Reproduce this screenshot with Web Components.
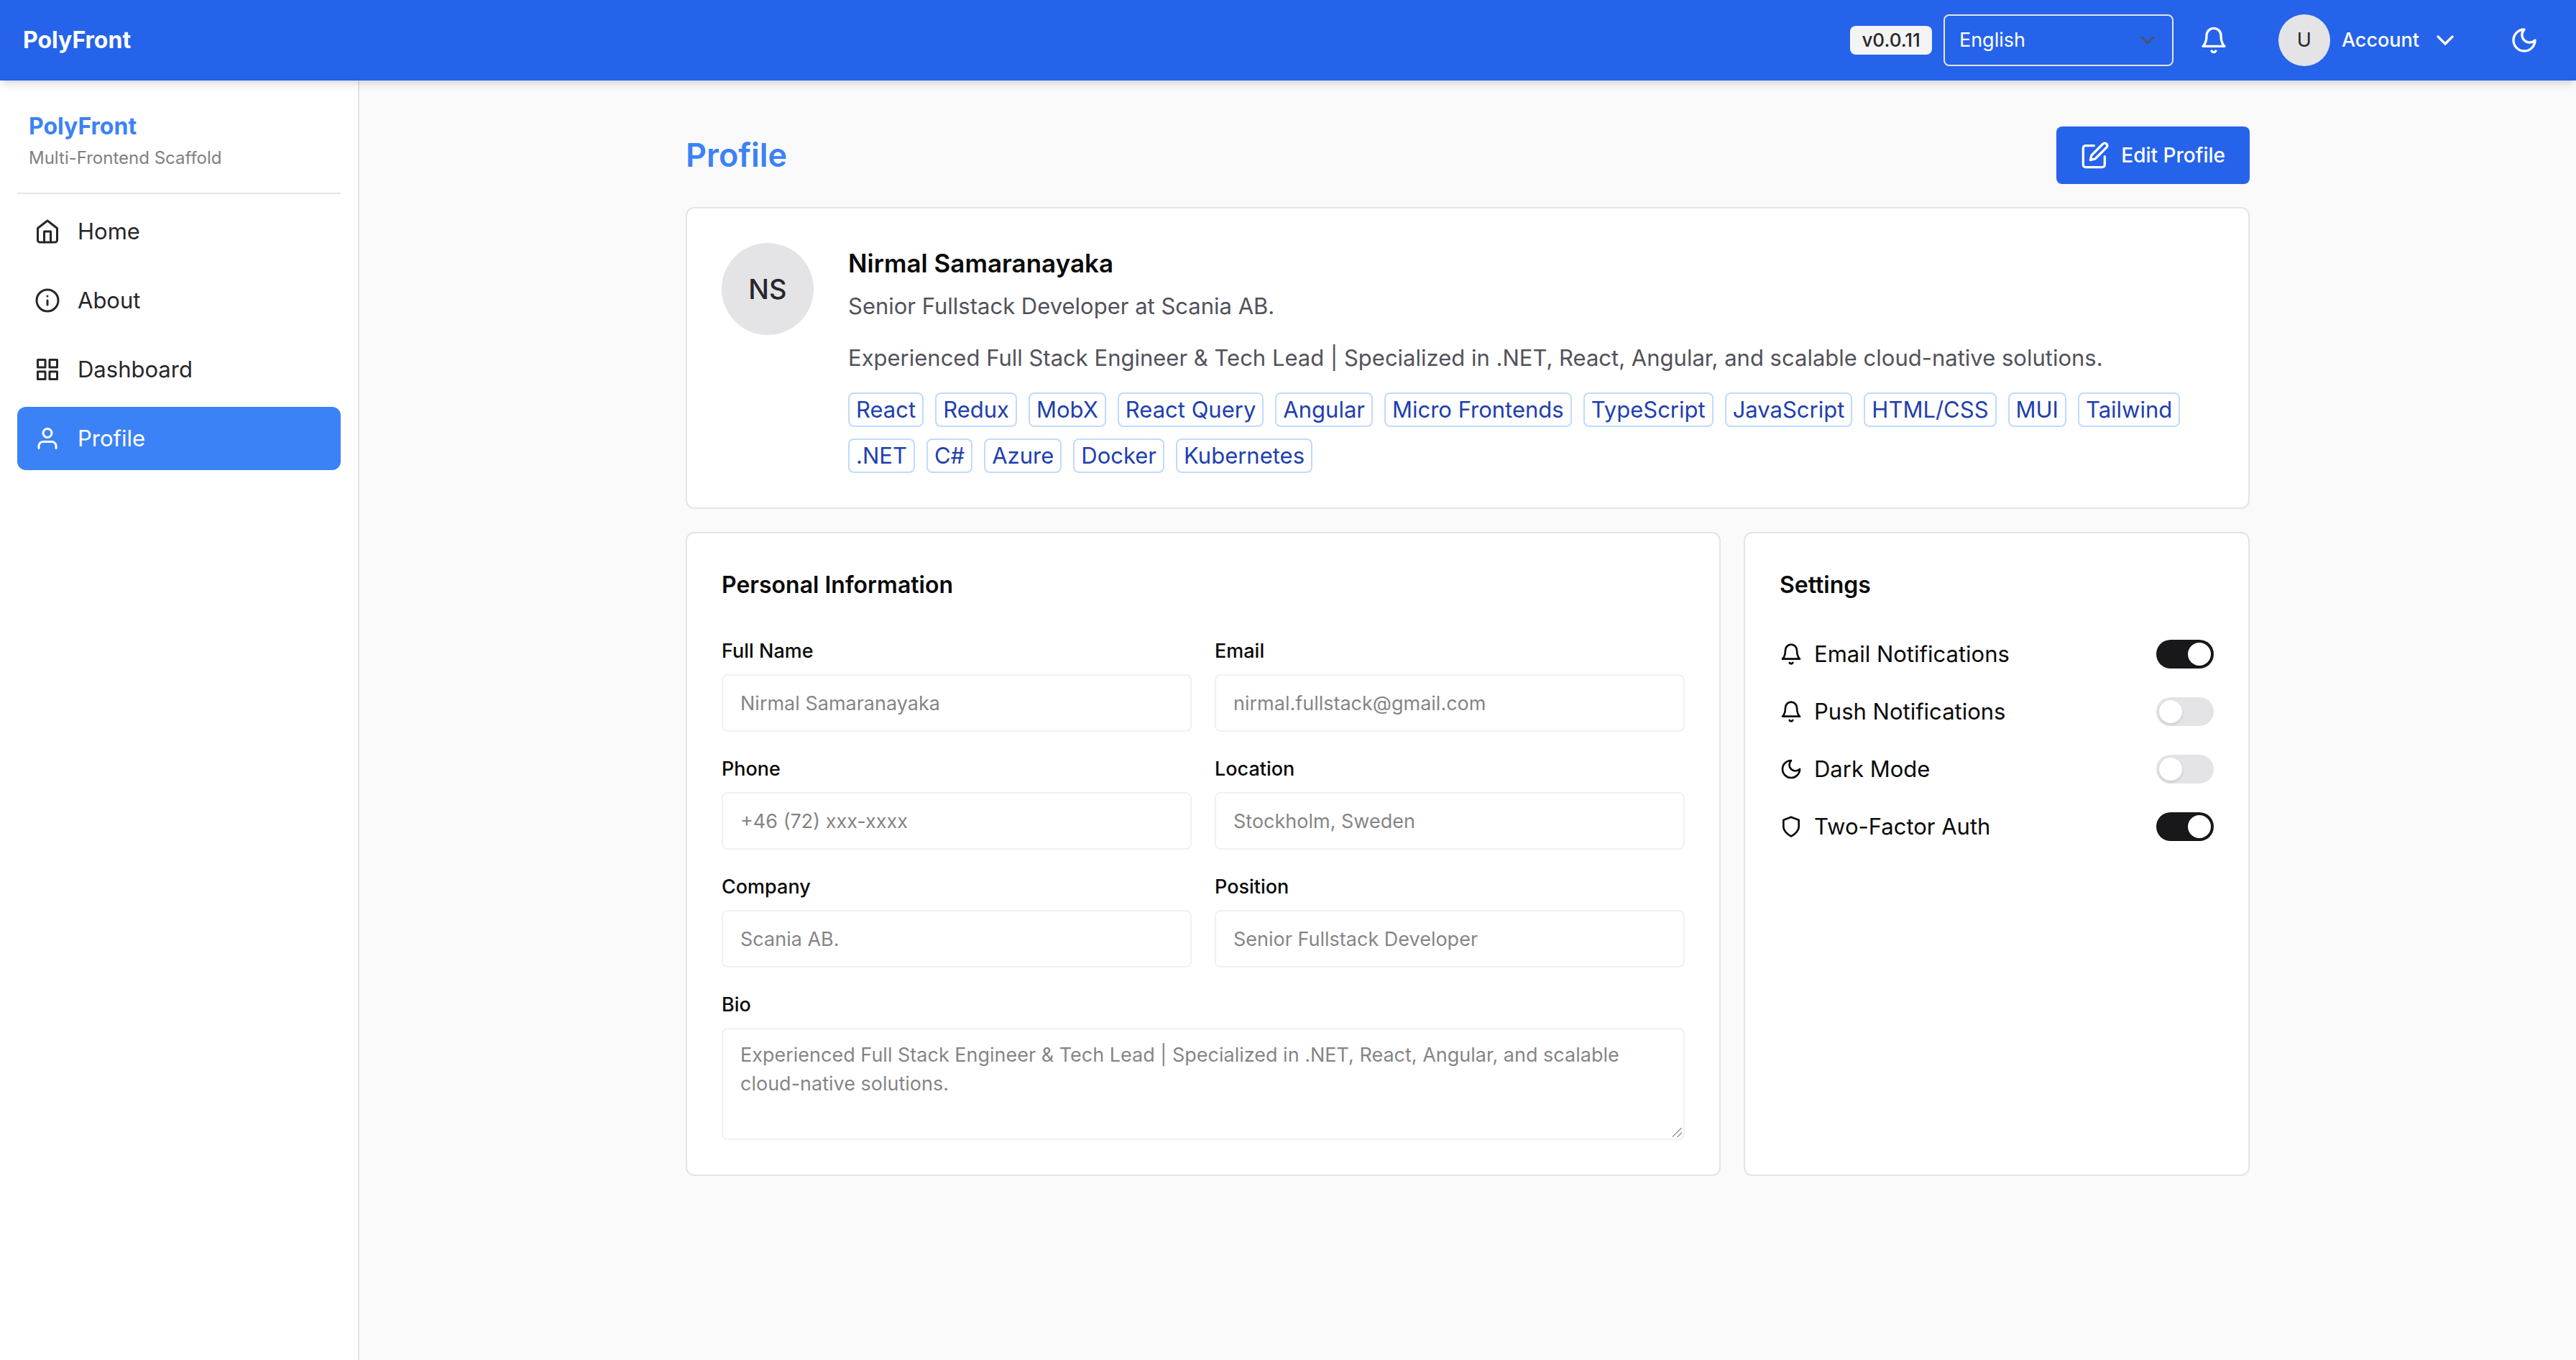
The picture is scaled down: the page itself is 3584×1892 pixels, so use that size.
<!DOCTYPE html>
<html lang="en">
<head>
<meta charset="utf-8">
<meta name="viewport" content="width=device-width, initial-scale=1">
<title>PolyFront - Profile</title>
<style>
  :root {
    --brand: #2563eb;
    --accent: #3b82f6;
    --line: #e4e4e7;
    --ink: #0a0a0a;
    --ink-soft: #27272a;
    --muted: #52525b;
    --page: #fafafa;
    --text-sm: 27px;
    --text-lg: 32px;
  }
  html, body { height: 100%; }
  body {
    margin: 0;
    background: var(--page);
    color: var(--ink);
    font: 400 31px/48px Inter, "Liberation Sans", sans-serif;
  }
</style>
</head>
<body>
<pf-app></pf-app>

<script>
  const ICONS = {
    home: '<path d="m3 9 9-7 9 7v11a2 2 0 0 1-2 2H5a2 2 0 0 1-2-2z"/><path d="M9 22V12h6v10"/>',
    info: '<circle cx="12" cy="12" r="10"/><path d="M12 16v-4"/><path d="M12 8h.01"/>',
    grid: '<rect x="3" y="3" width="7" height="7"/><rect x="14" y="3" width="7" height="7"/><rect x="14" y="14" width="7" height="7"/><rect x="3" y="14" width="7" height="7"/>',
    user: '<path d="M20 21v-2a4 4 0 0 0-4-4H8a4 4 0 0 0-4 4v2"/><circle cx="12" cy="7" r="4"/>',
    bell: '<path d="M6 8a6 6 0 0 1 12 0c0 7 3 9 3 9H3s3-2 3-9"/><path d="M10.3 21a1.94 1.94 0 0 0 3.4 0"/>',
    moon: '<path d="M12 3a6 6 0 0 0 9 9 9 9 0 1 1-9-9Z"/>',
    shield: '<path d="M12 22s8-4 8-10V5l-8-3-8 3v7c0 6 8 10 8 10"/>',
    chevron: '<path d="m6 9 6 6 6-6"/>',
    edit: '<path d="M11 4H4a2 2 0 0 0-2 2v14a2 2 0 0 0 2 2h14a2 2 0 0 0 2-2v-7"/><path d="M18.5 2.5a2.121 2.121 0 0 1 3 3L12 15l-4 1 1-4 9.5-9.5z"/>'
  };

  const define = (name, render) => customElements.define(name, class extends HTMLElement {
    constructor() {
      super();
      this.attachShadow({ mode: 'open' });
    }
    connectedCallback() {
      const t = document.createElement('template');
      t.innerHTML = `<style>*, ::before { box-sizing: border-box; } h1, h2, p { margin: 0; }
        button, input, textarea, select { font: inherit; margin: 0; }</style>` + render(this);
      this.shadowRoot.replaceChildren(t.content.cloneNode(true));
    }
  });
  const attr = (el, name) => (el.getAttribute(name) || '').replace(/&/g, '&amp;').replace(/"/g, '&quot;');

  define('pf-icon', el => `
    <style>
      :host { display: block; flex: none; width: 40px; height: 40px; }
      svg { display: block; width: 100%; height: 100%; }
    </style>
    <svg viewBox="0 0 24 24" fill="none" stroke="currentColor" stroke-width="2" stroke-linecap="round" stroke-linejoin="round" aria-hidden="true">${ICONS[el.getAttribute('name')]}</svg>`);

  define('pf-avatar', () => `
    <style>
      :host { display: flex; flex: none; align-items: center; justify-content: center; width: 72px; height: 72px;
        border-radius: 50%; background: var(--line); color: var(--ink-soft); font-size: var(--text-sm); font-weight: 400; }
      :host([size="lg"]) { width: 128px; height: 128px; font-size: 38px; font-weight: 500; }
    </style><slot></slot>`);

  define('pf-button', () => `
    <style>
      :host { display: block; }
      button { display: flex; align-items: center; gap: 16px; height: 80px; padding: 0 32px; border: 2px solid transparent;
        border-radius: 8px; background: var(--brand); color: #fff; font-size: var(--text-sm); line-height: 40px; font-weight: 500; }
      :host([primary]) button { font-size: 28px; }
      :host([square]) button { justify-content: center; width: 80px; padding: 0; }
    </style>
    <button type="button"><slot></slot></button>`);

  define('pf-language', () => `
    <style>
      :host { display: grid; width: 320px; height: 72px; color: #fff; }
      select, pf-icon { grid-area: 1 / 1; }
      select { appearance: none; padding: 0 20px; border: 2px solid var(--line); border-radius: 8px;
        background: transparent; color: inherit; font-size: var(--text-sm); line-height: 40px; }
      option { color: var(--ink); }
      pf-icon { place-self: center end; width: 32px; height: 32px; margin-right: 20px; color: #52525b; pointer-events: none; }
    </style>
    <select aria-label="Language"><option>English</option></select><pf-icon name="chevron"></pf-icon>`);

  define('pf-header', () => `
    <style>
      :host { display: flex; align-items: center; justify-content: space-between; height: 112px; padding: 0 32px;
        box-sizing: border-box; background: var(--brand); color: #fff; z-index: 1;
        box-shadow: 0 8px 12px -2px rgb(0 0 0 / .1), 0 4px 8px -4px rgb(0 0 0 / .1); }
      .brand { font-size: var(--text-lg); font-weight: 700; }
      .tools { display: flex; align-items: center; gap: 16px; }
      .version { padding: 0 16px; border-radius: 8px; background: #f4f4f5; color: var(--ink-soft);
        font-size: 26px; line-height: 40px; font-weight: 500; }
    </style>
    <span class="brand">PolyFront</span>
    <div class="tools">
      <span class="version">v0.0.11</span>
      <pf-language></pf-language>
      <pf-button square><pf-icon name="bell"></pf-icon></pf-button>
      <pf-button><pf-avatar>U</pf-avatar>Account<pf-icon name="chevron"></pf-icon></pf-button>
      <pf-button square><pf-icon name="moon"></pf-icon></pf-button>
    </div>`);

  define('pf-nav-item', () => `
    <style>
      :host { display: block; color: var(--ink-soft); }
      a { display: flex; align-items: center; gap: 24px; padding: 20px 24px; border-radius: 12px; color: inherit; text-decoration: none; }
      :host([active]) a { background: var(--accent); color: #fff; }
      ::slotted(pf-icon) { width: 36px; height: 36px; }
    </style>
    <a href="#"><slot></slot></a>`);

  define('pf-sidebar', () => `
    <style>
      :host { display: block; box-sizing: border-box; flex: none; width: 500px; padding: 24px; border-right: 2px solid var(--line); background: #fff; }
      .head { padding: 16px 16px 32px; border-bottom: 2px solid var(--line); }
      .name { margin-bottom: 4px; color: var(--accent); font-size: var(--text-lg); font-weight: 700; }
      .tag { color: #808080; font-size: 24px; line-height: 32px; }
      nav { display: grid; gap: 8px; padding-top: 8px; }
    </style>
    <div class="head"><p class="name">PolyFront</p><p class="tag">Multi-Frontend Scaffold</p></div>
    <nav>
      <pf-nav-item><pf-icon name="home"></pf-icon>Home</pf-nav-item>
      <pf-nav-item><pf-icon name="info"></pf-icon>About</pf-nav-item>
      <pf-nav-item><pf-icon name="grid"></pf-icon>Dashboard</pf-nav-item>
      <pf-nav-item active><pf-icon name="user"></pf-icon>Profile</pf-nav-item>
    </nav>`);

  define('pf-card', () => `
    <style>
      :host { display: block; box-sizing: border-box; padding: 48px; border: 2px solid var(--line); border-radius: 12px; background: #fff; }
    </style><slot></slot>`);

  define('pf-chip', () => `
    <style>
      :host { display: block; padding: 0 9px; border: 2px solid #bfdbfe; border-radius: 8px; color: #1e40af; line-height: 44px; }
    </style><slot></slot>`);

  define('pf-summary', () => `
    <style>
      :host { display: flex; gap: 48px; }
      .text { flex: 1; min-width: 0; color: var(--muted); }
      h2 { margin-bottom: 8px; color: var(--ink); font-size: 35px; line-height: 56px; font-weight: 600; }
      .role, .bio { margin-bottom: 24px; }
      .chips { display: flex; flex-wrap: wrap; gap: 16px; }
    </style>
    <pf-avatar size="lg">NS</pf-avatar>
    <div class="text">
      <h2>Nirmal Samaranayaka</h2>
      <p class="role">Senior Fullstack Developer at Scania AB.</p>
      <p class="bio">Experienced Full Stack Engineer &amp; Tech Lead | Specialized in .NET, React, Angular, and scalable cloud-native solutions.</p>
      <div class="chips">${['React', 'Redux', 'MobX', 'React Query', 'Angular', 'Micro Frontends', 'TypeScript', 'JavaScript',
        'HTML/CSS', 'MUI', 'Tailwind', '.NET', 'C#', 'Azure', 'Docker', 'Kubernetes'].map(s => `<pf-chip>${s}</pf-chip>`).join('')}</div>
    </div>`);

  define('pf-field', el => `
    <style>
      :host { display: grid; gap: 12px; font-size: var(--text-sm); line-height: 40px; }
      :host([multiline]) { grid-column: 1 / -1; }
      label { font-weight: 500; }
      input, textarea { display: block; width: 100%; border: 2px solid var(--line); border-radius: 8px; background: #fff;
        color: var(--ink); opacity: .5; }
      input { height: 80px; padding: 0 24px; }
      textarea { padding: 16px 24px; line-height: 40px; resize: both; }
      textarea::-webkit-resizer { background: linear-gradient(135deg, transparent 46%, #333 46% 52%, transparent 52% 73%, #333 73% 79%, transparent 79%) 0 0 / 13px 13px no-repeat; }
    </style>
    <label for="control">${attr(el, 'label')}</label>
    ${el.hasAttribute('multiline')
      ? `<textarea id="control" rows="3" disabled>${attr(el, 'value')}</textarea>`
      : `<input id="control" type="text" value="${attr(el, 'value')}" disabled>`}`);

  define('pf-personal', () => `
    <style>
      :host { display: block; }
      h2 { margin-bottom: 48px; font-size: var(--text-lg); line-height: 48px; font-weight: 600; }
      .fields { display: grid; grid-template-columns: 1fr 1fr; gap: 32px; }
    </style>
    <h2>Personal Information</h2>
    <div class="fields">
      <pf-field label="Full Name" value="Nirmal Samaranayaka"></pf-field>
      <pf-field label="Email" value="nirmal.fullstack@gmail.com"></pf-field>
      <pf-field label="Phone" value="+46 (72) xxx-xxxx"></pf-field>
      <pf-field label="Location" value="Stockholm, Sweden"></pf-field>
      <pf-field label="Company" value="Scania AB."></pf-field>
      <pf-field label="Position" value="Senior Fullstack Developer"></pf-field>
      <pf-field multiline label="Bio" value="Experienced Full Stack Engineer &amp; Tech Lead | Specialized in .NET, React, Angular, and scalable cloud-native solutions."></pf-field>
    </div>`);

  define('pf-switch', el => `
    <style>
      :host { display: block; }
      label { display: flex; align-items: center; gap: 16px; }
      span { flex: 1; }
      pf-icon { width: 32px; height: 32px; }
      input { appearance: none; display: flex; flex: none; width: 80px; height: 40px; padding: 4px; border-radius: 20px; background: var(--line); }
      input::before { content: ""; width: 32px; height: 32px; border-radius: 50%; background: #fff; box-shadow: 0 2px 4px rgb(0 0 0 / .12); }
      input:checked { justify-content: flex-end; background: #18181b; }
    </style>
    <label><pf-icon name="${attr(el, 'icon')}"></pf-icon><span>${attr(el, 'label')}</span>
      <input type="checkbox" role="switch" ${el.hasAttribute('on') ? 'checked' : ''}></label>`);

  define('pf-settings', () => `
    <style>
      :host { display: block; }
      h2 { margin-bottom: 48px; font-size: var(--text-lg); line-height: 48px; font-weight: 600; }
      .rows { display: grid; gap: 32px; }
    </style>
    <h2>Settings</h2>
    <div class="rows">
      <pf-switch icon="bell" label="Email Notifications" on></pf-switch>
      <pf-switch icon="bell" label="Push Notifications"></pf-switch>
      <pf-switch icon="moon" label="Dark Mode"></pf-switch>
      <pf-switch icon="shield" label="Two-Factor Auth" on></pf-switch>
    </div>`);

  define('pf-profile-page', () => `
    <style>
      :host { display: grid; gap: 32px; width: 100%; max-width: 2176px; margin: 0 auto; }
      .top { display: flex; align-items: center; justify-content: space-between; }
      h1 { color: var(--accent); font-size: 45px; line-height: 64px; font-weight: 600; }
      .columns { display: grid; grid-template-columns: repeat(3, 1fr); gap: 32px; }
      .wide { grid-column: span 2; }
    </style>
    <div class="top"><h1>Profile</h1><pf-button primary><pf-icon name="edit"></pf-icon>Edit Profile</pf-button></div>
    <pf-card><pf-summary></pf-summary></pf-card>
    <div class="columns">
      <pf-card class="wide"><pf-personal></pf-personal></pf-card>
      <pf-card><pf-settings></pf-settings></pf-card>
    </div>`);

  define('pf-app', () => `
    <style>
      :host { display: flex; flex-direction: column; min-height: 100vh; }
      .body { display: flex; flex: 1; }
      main { flex: 1; min-width: 0; padding: 64px; }
    </style>
    <pf-header></pf-header>
    <div class="body"><pf-sidebar></pf-sidebar><main><pf-profile-page></pf-profile-page></main></div>`);
</script>
</body>
</html>
